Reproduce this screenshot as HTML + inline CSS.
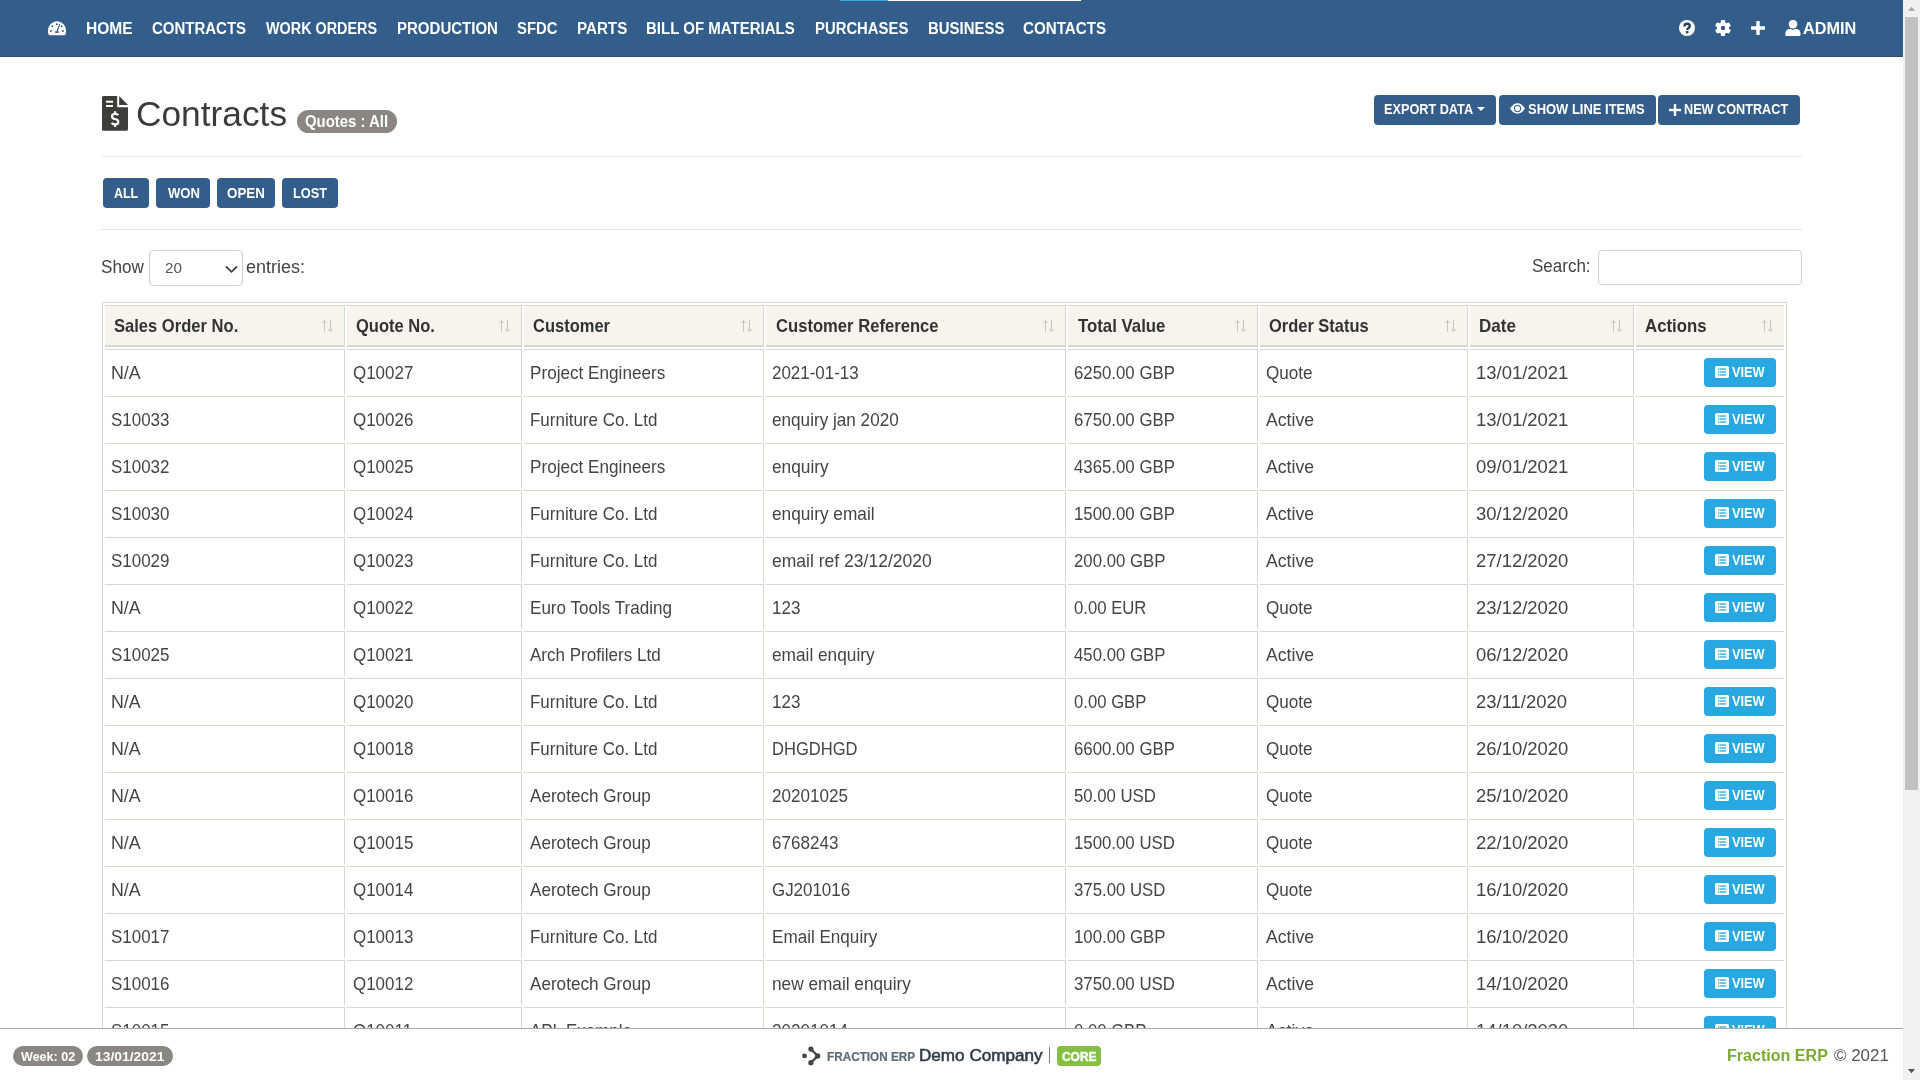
<!DOCTYPE html>
<html><head><meta charset="utf-8">
<style>
*{box-sizing:border-box;margin:0;padding:0}
html,body{width:1920px;height:1080px;overflow:hidden;background:#fff;will-change:transform;font-family:"Liberation Sans",sans-serif;color:#444}
.a{position:absolute}
.t{position:absolute;white-space:nowrap;transform-origin:0 0}
#nav{left:0;top:0;width:1903px;height:57px;background:#335d8b;border-bottom:1px solid #30506f}
.box{position:absolute;background:#335d8b;border-radius:4px}
.hr{position:absolute;left:101px;width:1701px;height:1px;background:#e6e6e6}
table{position:absolute;left:102px;top:302px;border:1px solid #d9d6d1;border-collapse:separate;border-spacing:2px;table-layout:fixed}
td,th{border-top:1px solid #d9d6d1;border-right:1px solid #d9d6d1;text-align:left;white-space:nowrap;overflow:hidden;font-family:"Liberation Sans",sans-serif}
th{height:42px;background:#f7f4f0;border-bottom:2px solid #d9d6d1;font-size:18.5px;font-weight:bold;color:#333;padding:1px 0 0 10px;position:relative;letter-spacing:-0.75px;vertical-align:middle}
td{height:45px;font-size:18.5px;color:#444;padding:2px 0 0 6px;vertical-align:middle;}
.s{display:inline-block;transform-origin:0 50%}
td:last-child,th:last-child{border-right:0}
.srt{position:absolute;right:10px;top:14px}
.view{position:relative;display:block;float:right;margin-right:8px;margin-top:-2px;background:#27a8e0;height:29px;width:72px;border-radius:4px}
.vt{position:absolute;left:28px;top:7.6px;font-size:14.5px;line-height:14.5px;font-weight:bold;color:#fff;transform:scaleX(0.88);transform-origin:0 0}
#footer{left:0;top:1028px;width:1903px;height:52px;background:#fff;border-top:1px solid #a9a9a9}
.fb{position:absolute;background:#8a8782;border-radius:10px}
</style></head><body>
<div id="nav" class="a"></div>
<div class="a" style="left:840px;top:0;width:48px;height:1px;background:#3aa8d8"></div>
<div class="a" style="left:888px;top:0;width:193px;height:1px;background:#fff"></div>
<!-- gauge -->
<svg class="a" style="left:48px;top:20.8px" width="18" height="15" viewBox="0 0 18 15">
<path d="M2 14.3 Q0.4 14.3 0.2 12.6 Q0 11.5 0 9.5 A9 9.3 0 0 1 18 9.5 Q18 11.5 17.8 12.6 Q17.6 14.3 16 14.3 Z" fill="#fff"/>
<g fill="#335d8b"><circle cx="4.4" cy="5.2" r="1"/><circle cx="8.9" cy="3.2" r="1"/><circle cx="13.6" cy="5.2" r="1"/><circle cx="2.9" cy="10.1" r="1"/><circle cx="14.9" cy="10.1" r="1"/>
<path d="M11.2 2.9 L12.3 3.3 L9.8 10.3 L8.6 10.1 Z"/><rect x="7.2" y="10.2" width="3.5" height="1.7"/></g>
</svg>
<!-- right nav icons -->
<svg class="a" style="left:1679px;top:20px" width="16" height="16" viewBox="0 0 16 16">
<circle cx="8" cy="8" r="8" fill="#fff"/>
<path d="M5.5 6.4 Q5.5 3.8 8.1 3.8 Q10.8 3.8 10.8 6.1 Q10.8 7.5 9.3 8.2 Q8.2 8.8 8.2 10" stroke="#27405c" stroke-width="2.4" fill="none"/>
<rect x="6.9" y="11" width="2.6" height="2.2" rx="0.4" fill="#27405c"/>
</svg>
<svg class="a" style="left:1715px;top:20px" width="16" height="16" viewBox="0 0 16 16">
<g fill="#fff" transform="translate(8 8)">
<circle r="6.1"/>
<rect x="-2.1" y="-8" width="4.2" height="16" rx="0.7"/>
<rect x="-2.1" y="-8" width="4.2" height="16" rx="0.7" transform="rotate(60)"/>
<rect x="-2.1" y="-8" width="4.2" height="16" rx="0.7" transform="rotate(120)"/>
</g>
<circle cx="8" cy="8" r="2.2" fill="#335d8b"/>
</svg>
<svg class="a" style="left:1751px;top:21px" width="14" height="14" viewBox="0 0 14 14">
<rect x="5.3" y="0" width="3.4" height="14" rx="0.6" fill="#fff"/><rect x="0" y="5.3" width="14" height="3.4" rx="0.6" fill="#fff"/>
</svg>
<svg class="a" style="left:1784.5px;top:20px" width="16" height="16" viewBox="0 0 16 16">
<circle cx="8" cy="4.1" r="4.3" fill="#fff"/>
<path d="M0.3 14.6 Q0.3 9.4 4.4 9.1 Q6.3 9.0 8 9.9 Q9.7 9.0 11.6 9.1 Q15.6 9.4 15.6 14.6 Q15.6 16.1 14.1 16.1 L1.8 16.1 Q0.3 16.1 0.3 14.6 Z" fill="#fff"/>
</svg>
<!-- scrollbar -->
<div class="a" style="left:1903px;top:0;width:17px;height:1080px;background:#f1f1f1"></div>
<div class="a" style="left:1905px;top:17px;width:13px;height:773px;background:#c1c1c1"></div>
<svg class="a" style="left:1903px;top:0" width="17" height="17"><path d="M5 10.8 L8.5 6.8 L12 10.8 Z" fill="#a3a3a3"/></svg>
<svg class="a" style="left:1903px;top:1063px" width="17" height="17"><path d="M5 6 L8.5 10.3 L12 6 Z" fill="#505050"/></svg>

<!-- title -->
<svg class="a" style="left:102px;top:96px" width="26" height="35" viewBox="0 0 26 35">
<path d="M0 1.5 Q0 0 1.5 0 L15.2 0 L15.2 11.2 L26 11.2 L26 33.2 Q26 34.7 24.5 34.7 L1.5 34.7 Q0 34.7 0 33.2 Z" fill="#3d3d3a"/>
<path d="M17.2 0 L26 8.9 L17.2 8.9 Z" fill="#3d3d3a"/>
<rect x="4" y="4.7" width="7" height="2" fill="#fff"/><rect x="4" y="9" width="7" height="2" fill="#fff"/>
<path d="M16.3 19.2 Q15.4 17.9 13.1 17.9 Q10 17.9 10 20.4 Q10 22.5 13.1 23 Q16.3 23.5 16.3 25.9 Q16.3 28.3 13.1 28.3 Q10.6 28.3 9.6 26.8 M13.1 15.2 L13.1 17.9 M13.1 28.3 L13.1 31" stroke="#fff" stroke-width="2.2" fill="none"/>
</svg>
<div class="a" style="left:297px;top:110px;width:100px;height:23px;background:#8a8782;border-radius:11.5px"></div>

<!-- top right buttons -->
<div class="box" style="left:1374px;top:95px;width:122px;height:30px"></div>
<div class="box" style="left:1499px;top:95px;width:157px;height:30px"></div>
<div class="box" style="left:1658px;top:95px;width:142px;height:30px"></div>
<svg class="a" style="left:1477px;top:107px" width="8" height="4"><path d="M0 0 L8 0 L4 4 Z" fill="#fff"/></svg>
<svg class="a" style="left:1510px;top:103px" width="15" height="11" viewBox="0 0 15 11">
<path d="M0 5.5 Q3.5 0.3 7.5 0.3 Q11.5 0.3 15 5.5 Q11.5 10.7 7.5 10.7 Q3.5 10.7 0 5.5 Z" fill="#fff"/>
<circle cx="7.5" cy="5.6" r="3.1" fill="none" stroke="#335d8b" stroke-width="1.1"/>
</svg>
<svg class="a" style="left:1669px;top:103.5px" width="12" height="12" viewBox="0 0 12 12">
<rect x="4.8" y="0" width="2.4" height="12" fill="#fff"/><rect x="0" y="4.8" width="12" height="2.4" fill="#fff"/>
</svg>
<div class="hr" style="top:156px"></div>
<div class="box" style="left:103px;top:178px;width:46px;height:30px"></div>
<div class="box" style="left:156px;top:178px;width:54px;height:30px"></div>
<div class="box" style="left:217px;top:178px;width:58px;height:30px"></div>
<div class="box" style="left:282px;top:178px;width:56px;height:30px"></div>
<div class="hr" style="top:229px"></div>

<div class="a" style="left:149px;top:250px;width:94px;height:36px;border:1px solid #cfcfcf;border-radius:4px"></div>
<svg class="a" style="left:224.5px;top:264.5px" width="13" height="9" viewBox="0 0 13 9"><path d="M1 1.5 L6.5 6.8 L12 1.5" stroke="#444" stroke-width="1.8" fill="none"/></svg>
<div class="a" style="left:1598px;top:250px;width:204px;height:35px;border:1px solid #cfcfcf;border-radius:4px"></div>

<table>
<colgroup><col style="width:240px"><col style="width:175px"><col style="width:240px"><col style="width:300px"><col style="width:190px"><col style="width:208px"><col style="width:164px"><col style="width:148px"></colgroup>
<thead><tr><th><svg class="srt" width="13" height="13" viewBox="0 0 13 13"><g stroke="#c8c5c0" stroke-width="1" fill="none"><path d="M3.5 0.6V11.8"/><path d="M0.9 3.2L3.5 0.6L6.1 3.2"/><path d="M9.5 0V11.5"/><path d="M6.9 8.9L9.5 11.5L12.1 8.9"/></g></svg></th><th><svg class="srt" width="13" height="13" viewBox="0 0 13 13"><g stroke="#c8c5c0" stroke-width="1" fill="none"><path d="M3.5 0.6V11.8"/><path d="M0.9 3.2L3.5 0.6L6.1 3.2"/><path d="M9.5 0V11.5"/><path d="M6.9 8.9L9.5 11.5L12.1 8.9"/></g></svg></th><th><svg class="srt" width="13" height="13" viewBox="0 0 13 13"><g stroke="#c8c5c0" stroke-width="1" fill="none"><path d="M3.5 0.6V11.8"/><path d="M0.9 3.2L3.5 0.6L6.1 3.2"/><path d="M9.5 0V11.5"/><path d="M6.9 8.9L9.5 11.5L12.1 8.9"/></g></svg></th><th><svg class="srt" width="13" height="13" viewBox="0 0 13 13"><g stroke="#c8c5c0" stroke-width="1" fill="none"><path d="M3.5 0.6V11.8"/><path d="M0.9 3.2L3.5 0.6L6.1 3.2"/><path d="M9.5 0V11.5"/><path d="M6.9 8.9L9.5 11.5L12.1 8.9"/></g></svg></th><th><svg class="srt" width="13" height="13" viewBox="0 0 13 13"><g stroke="#c8c5c0" stroke-width="1" fill="none"><path d="M3.5 0.6V11.8"/><path d="M0.9 3.2L3.5 0.6L6.1 3.2"/><path d="M9.5 0V11.5"/><path d="M6.9 8.9L9.5 11.5L12.1 8.9"/></g></svg></th><th><svg class="srt" width="13" height="13" viewBox="0 0 13 13"><g stroke="#c8c5c0" stroke-width="1" fill="none"><path d="M3.5 0.6V11.8"/><path d="M0.9 3.2L3.5 0.6L6.1 3.2"/><path d="M9.5 0V11.5"/><path d="M6.9 8.9L9.5 11.5L12.1 8.9"/></g></svg></th><th><svg class="srt" width="13" height="13" viewBox="0 0 13 13"><g stroke="#c8c5c0" stroke-width="1" fill="none"><path d="M3.5 0.6V11.8"/><path d="M0.9 3.2L3.5 0.6L6.1 3.2"/><path d="M9.5 0V11.5"/><path d="M6.9 8.9L9.5 11.5L12.1 8.9"/></g></svg></th><th><svg class="srt" width="13" height="13" viewBox="0 0 13 13"><g stroke="#c8c5c0" stroke-width="1" fill="none"><path d="M3.5 0.6V11.8"/><path d="M0.9 3.2L3.5 0.6L6.1 3.2"/><path d="M9.5 0V11.5"/><path d="M6.9 8.9L9.5 11.5L12.1 8.9"/></g></svg></th></tr></thead>
<tbody>
<tr><td><span class="s" style="transform:scaleX(0.9622)">N/A</span></td><td><span class="s" style="transform:scaleX(0.9162)">Q10027</span></td><td><span class="s" style="transform:scaleX(0.9262)">Project Engineers</span></td><td><span class="s" style="transform:scaleX(0.9156)">2021-01-13</span></td><td><span class="s" style="transform:scaleX(0.9079)">6250.00 GBP</span></td><td><span class="s" style="transform:scaleX(0.9237)">Quote</span></td><td><span class="s" style="transform:scaleX(0.9978)">13/01/2021</span></td><td><span class="view"><svg width="14" height="12" viewBox="0 0 14 12" style="position:absolute;left:11px;top:8px"><rect x="0" y="0" width="14" height="12" rx="1.5" fill="#fff"/><g fill="#27a8e0"><rect x="3" y="2.4" width="1.2" height="1.3"/><rect x="3" y="5.4" width="1.2" height="1.3"/><rect x="3" y="8.3" width="1.2" height="1.3"/><rect x="4.6" y="2.4" width="6.6" height="1.3"/><rect x="4.6" y="5.4" width="6.6" height="1.3"/><rect x="4.6" y="8.3" width="6.6" height="1.3"/></g></svg><span class="vt">VIEW</span></span></td></tr>
<tr><td><span class="s" style="transform:scaleX(0.9169)">S10033</span></td><td><span class="s" style="transform:scaleX(0.9162)">Q10026</span></td><td><span class="s" style="transform:scaleX(0.9180)">Furniture Co. Ltd</span></td><td><span class="s" style="transform:scaleX(0.9265)">enquiry jan 2020</span></td><td><span class="s" style="transform:scaleX(0.9079)">6750.00 GBP</span></td><td><span class="s" style="transform:scaleX(0.9531)">Active</span></td><td><span class="s" style="transform:scaleX(0.9978)">13/01/2021</span></td><td><span class="view"><svg width="14" height="12" viewBox="0 0 14 12" style="position:absolute;left:11px;top:8px"><rect x="0" y="0" width="14" height="12" rx="1.5" fill="#fff"/><g fill="#27a8e0"><rect x="3" y="2.4" width="1.2" height="1.3"/><rect x="3" y="5.4" width="1.2" height="1.3"/><rect x="3" y="8.3" width="1.2" height="1.3"/><rect x="4.6" y="2.4" width="6.6" height="1.3"/><rect x="4.6" y="5.4" width="6.6" height="1.3"/><rect x="4.6" y="8.3" width="6.6" height="1.3"/></g></svg><span class="vt">VIEW</span></span></td></tr>
<tr><td><span class="s" style="transform:scaleX(0.9169)">S10032</span></td><td><span class="s" style="transform:scaleX(0.9162)">Q10025</span></td><td><span class="s" style="transform:scaleX(0.9262)">Project Engineers</span></td><td><span class="s" style="transform:scaleX(0.9352)">enquiry</span></td><td><span class="s" style="transform:scaleX(0.9079)">4365.00 GBP</span></td><td><span class="s" style="transform:scaleX(0.9531)">Active</span></td><td><span class="s" style="transform:scaleX(0.9978)">09/01/2021</span></td><td><span class="view"><svg width="14" height="12" viewBox="0 0 14 12" style="position:absolute;left:11px;top:8px"><rect x="0" y="0" width="14" height="12" rx="1.5" fill="#fff"/><g fill="#27a8e0"><rect x="3" y="2.4" width="1.2" height="1.3"/><rect x="3" y="5.4" width="1.2" height="1.3"/><rect x="3" y="8.3" width="1.2" height="1.3"/><rect x="4.6" y="2.4" width="6.6" height="1.3"/><rect x="4.6" y="5.4" width="6.6" height="1.3"/><rect x="4.6" y="8.3" width="6.6" height="1.3"/></g></svg><span class="vt">VIEW</span></span></td></tr>
<tr><td><span class="s" style="transform:scaleX(0.9169)">S10030</span></td><td><span class="s" style="transform:scaleX(0.9162)">Q10024</span></td><td><span class="s" style="transform:scaleX(0.9180)">Furniture Co. Ltd</span></td><td><span class="s" style="transform:scaleX(0.9323)">enquiry email</span></td><td><span class="s" style="transform:scaleX(0.9079)">1500.00 GBP</span></td><td><span class="s" style="transform:scaleX(0.9531)">Active</span></td><td><span class="s" style="transform:scaleX(0.9978)">30/12/2020</span></td><td><span class="view"><svg width="14" height="12" viewBox="0 0 14 12" style="position:absolute;left:11px;top:8px"><rect x="0" y="0" width="14" height="12" rx="1.5" fill="#fff"/><g fill="#27a8e0"><rect x="3" y="2.4" width="1.2" height="1.3"/><rect x="3" y="5.4" width="1.2" height="1.3"/><rect x="3" y="8.3" width="1.2" height="1.3"/><rect x="4.6" y="2.4" width="6.6" height="1.3"/><rect x="4.6" y="5.4" width="6.6" height="1.3"/><rect x="4.6" y="8.3" width="6.6" height="1.3"/></g></svg><span class="vt">VIEW</span></span></td></tr>
<tr><td><span class="s" style="transform:scaleX(0.9169)">S10029</span></td><td><span class="s" style="transform:scaleX(0.9162)">Q10023</span></td><td><span class="s" style="transform:scaleX(0.9180)">Furniture Co. Ltd</span></td><td><span class="s" style="transform:scaleX(0.9472)">email ref 23/12/2020</span></td><td><span class="s" style="transform:scaleX(0.9064)">200.00 GBP</span></td><td><span class="s" style="transform:scaleX(0.9531)">Active</span></td><td><span class="s" style="transform:scaleX(0.9978)">27/12/2020</span></td><td><span class="view"><svg width="14" height="12" viewBox="0 0 14 12" style="position:absolute;left:11px;top:8px"><rect x="0" y="0" width="14" height="12" rx="1.5" fill="#fff"/><g fill="#27a8e0"><rect x="3" y="2.4" width="1.2" height="1.3"/><rect x="3" y="5.4" width="1.2" height="1.3"/><rect x="3" y="8.3" width="1.2" height="1.3"/><rect x="4.6" y="2.4" width="6.6" height="1.3"/><rect x="4.6" y="5.4" width="6.6" height="1.3"/><rect x="4.6" y="8.3" width="6.6" height="1.3"/></g></svg><span class="vt">VIEW</span></span></td></tr>
<tr><td><span class="s" style="transform:scaleX(0.9622)">N/A</span></td><td><span class="s" style="transform:scaleX(0.9162)">Q10022</span></td><td><span class="s" style="transform:scaleX(0.9221)">Euro Tools Trading</span></td><td><span class="s" style="transform:scaleX(0.9222)">123</span></td><td><span class="s" style="transform:scaleX(0.9024)">0.00 EUR</span></td><td><span class="s" style="transform:scaleX(0.9237)">Quote</span></td><td><span class="s" style="transform:scaleX(0.9978)">23/12/2020</span></td><td><span class="view"><svg width="14" height="12" viewBox="0 0 14 12" style="position:absolute;left:11px;top:8px"><rect x="0" y="0" width="14" height="12" rx="1.5" fill="#fff"/><g fill="#27a8e0"><rect x="3" y="2.4" width="1.2" height="1.3"/><rect x="3" y="5.4" width="1.2" height="1.3"/><rect x="3" y="8.3" width="1.2" height="1.3"/><rect x="4.6" y="2.4" width="6.6" height="1.3"/><rect x="4.6" y="5.4" width="6.6" height="1.3"/><rect x="4.6" y="8.3" width="6.6" height="1.3"/></g></svg><span class="vt">VIEW</span></span></td></tr>
<tr><td><span class="s" style="transform:scaleX(0.9169)">S10025</span></td><td><span class="s" style="transform:scaleX(0.9162)">Q10021</span></td><td><span class="s" style="transform:scaleX(0.9207)">Arch Profilers Ltd</span></td><td><span class="s" style="transform:scaleX(0.9323)">email enquiry</span></td><td><span class="s" style="transform:scaleX(0.9064)">450.00 GBP</span></td><td><span class="s" style="transform:scaleX(0.9531)">Active</span></td><td><span class="s" style="transform:scaleX(0.9978)">06/12/2020</span></td><td><span class="view"><svg width="14" height="12" viewBox="0 0 14 12" style="position:absolute;left:11px;top:8px"><rect x="0" y="0" width="14" height="12" rx="1.5" fill="#fff"/><g fill="#27a8e0"><rect x="3" y="2.4" width="1.2" height="1.3"/><rect x="3" y="5.4" width="1.2" height="1.3"/><rect x="3" y="8.3" width="1.2" height="1.3"/><rect x="4.6" y="2.4" width="6.6" height="1.3"/><rect x="4.6" y="5.4" width="6.6" height="1.3"/><rect x="4.6" y="8.3" width="6.6" height="1.3"/></g></svg><span class="vt">VIEW</span></span></td></tr>
<tr><td><span class="s" style="transform:scaleX(0.9622)">N/A</span></td><td><span class="s" style="transform:scaleX(0.9162)">Q10020</span></td><td><span class="s" style="transform:scaleX(0.9180)">Furniture Co. Ltd</span></td><td><span class="s" style="transform:scaleX(0.9222)">123</span></td><td><span class="s" style="transform:scaleX(0.9024)">0.00 GBP</span></td><td><span class="s" style="transform:scaleX(0.9237)">Quote</span></td><td><span class="s" style="transform:scaleX(0.9978)">23/11/2020</span></td><td><span class="view"><svg width="14" height="12" viewBox="0 0 14 12" style="position:absolute;left:11px;top:8px"><rect x="0" y="0" width="14" height="12" rx="1.5" fill="#fff"/><g fill="#27a8e0"><rect x="3" y="2.4" width="1.2" height="1.3"/><rect x="3" y="5.4" width="1.2" height="1.3"/><rect x="3" y="8.3" width="1.2" height="1.3"/><rect x="4.6" y="2.4" width="6.6" height="1.3"/><rect x="4.6" y="5.4" width="6.6" height="1.3"/><rect x="4.6" y="8.3" width="6.6" height="1.3"/></g></svg><span class="vt">VIEW</span></span></td></tr>
<tr><td><span class="s" style="transform:scaleX(0.9622)">N/A</span></td><td><span class="s" style="transform:scaleX(0.9162)">Q10018</span></td><td><span class="s" style="transform:scaleX(0.9180)">Furniture Co. Ltd</span></td><td><span class="s" style="transform:scaleX(0.8947)">DHGDHGD</span></td><td><span class="s" style="transform:scaleX(0.9079)">6600.00 GBP</span></td><td><span class="s" style="transform:scaleX(0.9237)">Quote</span></td><td><span class="s" style="transform:scaleX(0.9978)">26/10/2020</span></td><td><span class="view"><svg width="14" height="12" viewBox="0 0 14 12" style="position:absolute;left:11px;top:8px"><rect x="0" y="0" width="14" height="12" rx="1.5" fill="#fff"/><g fill="#27a8e0"><rect x="3" y="2.4" width="1.2" height="1.3"/><rect x="3" y="5.4" width="1.2" height="1.3"/><rect x="3" y="8.3" width="1.2" height="1.3"/><rect x="4.6" y="2.4" width="6.6" height="1.3"/><rect x="4.6" y="5.4" width="6.6" height="1.3"/><rect x="4.6" y="8.3" width="6.6" height="1.3"/></g></svg><span class="vt">VIEW</span></span></td></tr>
<tr><td><span class="s" style="transform:scaleX(0.9622)">N/A</span></td><td><span class="s" style="transform:scaleX(0.9162)">Q10016</span></td><td><span class="s" style="transform:scaleX(0.9245)">Aerotech Group</span></td><td><span class="s" style="transform:scaleX(0.9222)">20201025</span></td><td><span class="s" style="transform:scaleX(0.9046)">50.00 USD</span></td><td><span class="s" style="transform:scaleX(0.9237)">Quote</span></td><td><span class="s" style="transform:scaleX(0.9978)">25/10/2020</span></td><td><span class="view"><svg width="14" height="12" viewBox="0 0 14 12" style="position:absolute;left:11px;top:8px"><rect x="0" y="0" width="14" height="12" rx="1.5" fill="#fff"/><g fill="#27a8e0"><rect x="3" y="2.4" width="1.2" height="1.3"/><rect x="3" y="5.4" width="1.2" height="1.3"/><rect x="3" y="8.3" width="1.2" height="1.3"/><rect x="4.6" y="2.4" width="6.6" height="1.3"/><rect x="4.6" y="5.4" width="6.6" height="1.3"/><rect x="4.6" y="8.3" width="6.6" height="1.3"/></g></svg><span class="vt">VIEW</span></span></td></tr>
<tr><td><span class="s" style="transform:scaleX(0.9622)">N/A</span></td><td><span class="s" style="transform:scaleX(0.9162)">Q10015</span></td><td><span class="s" style="transform:scaleX(0.9245)">Aerotech Group</span></td><td><span class="s" style="transform:scaleX(0.9222)">6768243</span></td><td><span class="s" style="transform:scaleX(0.9079)">1500.00 USD</span></td><td><span class="s" style="transform:scaleX(0.9237)">Quote</span></td><td><span class="s" style="transform:scaleX(0.9978)">22/10/2020</span></td><td><span class="view"><svg width="14" height="12" viewBox="0 0 14 12" style="position:absolute;left:11px;top:8px"><rect x="0" y="0" width="14" height="12" rx="1.5" fill="#fff"/><g fill="#27a8e0"><rect x="3" y="2.4" width="1.2" height="1.3"/><rect x="3" y="5.4" width="1.2" height="1.3"/><rect x="3" y="8.3" width="1.2" height="1.3"/><rect x="4.6" y="2.4" width="6.6" height="1.3"/><rect x="4.6" y="5.4" width="6.6" height="1.3"/><rect x="4.6" y="8.3" width="6.6" height="1.3"/></g></svg><span class="vt">VIEW</span></span></td></tr>
<tr><td><span class="s" style="transform:scaleX(0.9622)">N/A</span></td><td><span class="s" style="transform:scaleX(0.9162)">Q10014</span></td><td><span class="s" style="transform:scaleX(0.9245)">Aerotech Group</span></td><td><span class="s" style="transform:scaleX(0.9146)">GJ201016</span></td><td><span class="s" style="transform:scaleX(0.9064)">375.00 USD</span></td><td><span class="s" style="transform:scaleX(0.9237)">Quote</span></td><td><span class="s" style="transform:scaleX(0.9978)">16/10/2020</span></td><td><span class="view"><svg width="14" height="12" viewBox="0 0 14 12" style="position:absolute;left:11px;top:8px"><rect x="0" y="0" width="14" height="12" rx="1.5" fill="#fff"/><g fill="#27a8e0"><rect x="3" y="2.4" width="1.2" height="1.3"/><rect x="3" y="5.4" width="1.2" height="1.3"/><rect x="3" y="8.3" width="1.2" height="1.3"/><rect x="4.6" y="2.4" width="6.6" height="1.3"/><rect x="4.6" y="5.4" width="6.6" height="1.3"/><rect x="4.6" y="8.3" width="6.6" height="1.3"/></g></svg><span class="vt">VIEW</span></span></td></tr>
<tr><td><span class="s" style="transform:scaleX(0.9169)">S10017</span></td><td><span class="s" style="transform:scaleX(0.9162)">Q10013</span></td><td><span class="s" style="transform:scaleX(0.9180)">Furniture Co. Ltd</span></td><td><span class="s" style="transform:scaleX(0.9236)">Email Enquiry</span></td><td><span class="s" style="transform:scaleX(0.9064)">100.00 GBP</span></td><td><span class="s" style="transform:scaleX(0.9531)">Active</span></td><td><span class="s" style="transform:scaleX(0.9978)">16/10/2020</span></td><td><span class="view"><svg width="14" height="12" viewBox="0 0 14 12" style="position:absolute;left:11px;top:8px"><rect x="0" y="0" width="14" height="12" rx="1.5" fill="#fff"/><g fill="#27a8e0"><rect x="3" y="2.4" width="1.2" height="1.3"/><rect x="3" y="5.4" width="1.2" height="1.3"/><rect x="3" y="8.3" width="1.2" height="1.3"/><rect x="4.6" y="2.4" width="6.6" height="1.3"/><rect x="4.6" y="5.4" width="6.6" height="1.3"/><rect x="4.6" y="8.3" width="6.6" height="1.3"/></g></svg><span class="vt">VIEW</span></span></td></tr>
<tr><td><span class="s" style="transform:scaleX(0.9169)">S10016</span></td><td><span class="s" style="transform:scaleX(0.9162)">Q10012</span></td><td><span class="s" style="transform:scaleX(0.9245)">Aerotech Group</span></td><td><span class="s" style="transform:scaleX(0.9309)">new email enquiry</span></td><td><span class="s" style="transform:scaleX(0.9079)">3750.00 USD</span></td><td><span class="s" style="transform:scaleX(0.9531)">Active</span></td><td><span class="s" style="transform:scaleX(0.9978)">14/10/2020</span></td><td><span class="view"><svg width="14" height="12" viewBox="0 0 14 12" style="position:absolute;left:11px;top:8px"><rect x="0" y="0" width="14" height="12" rx="1.5" fill="#fff"/><g fill="#27a8e0"><rect x="3" y="2.4" width="1.2" height="1.3"/><rect x="3" y="5.4" width="1.2" height="1.3"/><rect x="3" y="8.3" width="1.2" height="1.3"/><rect x="4.6" y="2.4" width="6.6" height="1.3"/><rect x="4.6" y="5.4" width="6.6" height="1.3"/><rect x="4.6" y="8.3" width="6.6" height="1.3"/></g></svg><span class="vt">VIEW</span></span></td></tr>
<tr><td><span class="s" style="transform:scaleX(0.9169)">S10015</span></td><td><span class="s" style="transform:scaleX(0.9162)">Q10011</span></td><td><span class="s" style="transform:scaleX(0.9152)">APL Example</span></td><td><span class="s" style="transform:scaleX(0.9222)">20201014</span></td><td><span class="s" style="transform:scaleX(0.9024)">0.00 GBP</span></td><td><span class="s" style="transform:scaleX(0.9531)">Active</span></td><td><span class="s" style="transform:scaleX(0.9978)">14/10/2020</span></td><td><span class="view"><svg width="14" height="12" viewBox="0 0 14 12" style="position:absolute;left:11px;top:8px"><rect x="0" y="0" width="14" height="12" rx="1.5" fill="#fff"/><g fill="#27a8e0"><rect x="3" y="2.4" width="1.2" height="1.3"/><rect x="3" y="5.4" width="1.2" height="1.3"/><rect x="3" y="8.3" width="1.2" height="1.3"/><rect x="4.6" y="2.4" width="6.6" height="1.3"/><rect x="4.6" y="5.4" width="6.6" height="1.3"/><rect x="4.6" y="8.3" width="6.6" height="1.3"/></g></svg><span class="vt">VIEW</span></span></td></tr>
</tbody>
</table>

<div id="footer" class="a"></div>
<div class="fb" style="left:13px;top:1046px;width:70px;height:20px"></div>
<div class="fb" style="left:87px;top:1046px;width:86px;height:20px"></div>
<svg class="a" style="left:800px;top:1045px" width="22" height="22" viewBox="0 0 22 22">
<path d="M10.9 4.1 L17.7 10.9 L10.9 17.7" stroke="#444" stroke-width="2.2" fill="none"/>
<g fill="#444"><circle cx="4.5" cy="10.9" r="2.4"/><circle cx="10.9" cy="4.1" r="2.6"/><circle cx="17.7" cy="10.9" r="2.6"/><circle cx="10.9" cy="17.7" r="2.6"/></g>
</svg>
<div class="a" style="left:1049px;top:1047px;width:1.3px;height:16px;background:#777"></div>
<div class="a" style="left:1057px;top:1046px;width:44px;height:19.5px;background:#84bf41;border-radius:4px"></div>
<div class="t" style="left:85.71px;top:20.00px;font-size:17.40px;line-height:17.40px;transform:scaleX(0.8941);font-weight:bold;color:#fff;">HOME</div>
<div class="t" style="left:151.64px;top:20.00px;font-size:17.40px;line-height:17.40px;transform:scaleX(0.8620);font-weight:bold;color:#fff;">CONTRACTS</div>
<div class="t" style="left:266.20px;top:20.00px;font-size:17.40px;line-height:17.40px;transform:scaleX(0.8269);font-weight:bold;color:#fff;">WORK ORDERS</div>
<div class="t" style="left:396.54px;top:20.00px;font-size:17.40px;line-height:17.40px;transform:scaleX(0.8635);font-weight:bold;color:#fff;">PRODUCTION</div>
<div class="t" style="left:517.15px;top:20.00px;font-size:17.40px;line-height:17.40px;transform:scaleX(0.8522);font-weight:bold;color:#fff;">SFDC</div>
<div class="t" style="left:576.63px;top:20.00px;font-size:17.40px;line-height:17.40px;transform:scaleX(0.8714);font-weight:bold;color:#fff;">PARTS</div>
<div class="t" style="left:645.94px;top:20.00px;font-size:17.40px;line-height:17.40px;transform:scaleX(0.8632);font-weight:bold;color:#fff;">BILL OF MATERIALS</div>
<div class="t" style="left:814.55px;top:20.00px;font-size:17.40px;line-height:17.40px;transform:scaleX(0.8546);font-weight:bold;color:#fff;">PURCHASES</div>
<div class="t" style="left:927.54px;top:20.00px;font-size:17.40px;line-height:17.40px;transform:scaleX(0.8598);font-weight:bold;color:#fff;">BUSINESS</div>
<div class="t" style="left:1023.03px;top:20.00px;font-size:17.40px;line-height:17.40px;transform:scaleX(0.8713);font-weight:bold;color:#fff;">CONTACTS</div>
<div class="t" style="left:1803.06px;top:20.00px;font-size:17.40px;line-height:17.40px;transform:scaleX(0.9364);font-weight:bold;color:#fff;">ADMIN</div>
<div class="t" style="left:136.23px;top:97.30px;font-size:35.90px;line-height:35.90px;transform:scaleX(0.9834);color:#3b3b3b;">Contracts</div>
<div class="t" style="left:305.12px;top:114.30px;font-size:16.90px;line-height:16.90px;transform:scaleX(0.8826);font-weight:bold;color:#fff;">Quotes : All</div>
<div class="t" style="left:114.00px;top:185.00px;font-size:15.10px;line-height:15.10px;transform:scaleX(0.8241);font-weight:bold;color:#fff;">ALL</div>
<div class="t" style="left:167.50px;top:185.00px;font-size:15.10px;line-height:15.10px;transform:scaleX(0.8681);font-weight:bold;color:#fff;">WON</div>
<div class="t" style="left:227.01px;top:185.00px;font-size:15.10px;line-height:15.10px;transform:scaleX(0.8854);font-weight:bold;color:#fff;">OPEN</div>
<div class="t" style="left:292.65px;top:185.00px;font-size:15.10px;line-height:15.10px;transform:scaleX(0.8462);font-weight:bold;color:#fff;">LOST</div>
<div class="t" style="left:1384.18px;top:101.00px;font-size:15.50px;line-height:15.50px;transform:scaleX(0.8187);font-weight:bold;color:#fff;">EXPORT DATA</div>
<div class="t" style="left:1528.16px;top:101.00px;font-size:15.50px;line-height:15.50px;transform:scaleX(0.8362);font-weight:bold;color:#fff;">SHOW LINE ITEMS</div>
<div class="t" style="left:1684.18px;top:101.00px;font-size:15.50px;line-height:15.50px;transform:scaleX(0.8173);font-weight:bold;color:#fff;">NEW CONTRACT</div>
<div class="t" style="left:101.19px;top:258.20px;font-size:18.75px;line-height:18.75px;transform:scaleX(0.9130);color:#444;">Show</div>
<div class="t" style="left:246.44px;top:258.20px;font-size:18.75px;line-height:18.75px;transform:scaleX(0.9576);color:#444;">entries:</div>
<div class="t" style="left:1532.39px;top:256.90px;font-size:18.75px;line-height:18.75px;transform:scaleX(0.9065);color:#444;">Search:</div>
<div class="t" style="left:164.59px;top:259.60px;font-size:15.10px;line-height:15.10px;transform:scaleX(1.0062);color:#555;">20</div>
<div class="t" style="left:114.11px;top:316.90px;font-size:18.60px;line-height:18.60px;transform:scaleX(0.8905);font-weight:bold;color:#333;">Sales Order No.</div>
<div class="t" style="left:356.31px;top:316.90px;font-size:18.60px;line-height:18.60px;transform:scaleX(0.8885);font-weight:bold;color:#333;">Quote No.</div>
<div class="t" style="left:533.11px;top:316.90px;font-size:18.60px;line-height:18.60px;transform:scaleX(0.8872);font-weight:bold;color:#333;">Customer</div>
<div class="t" style="left:775.51px;top:316.90px;font-size:18.60px;line-height:18.60px;transform:scaleX(0.8939);font-weight:bold;color:#333;">Customer Reference</div>
<div class="t" style="left:1078.30px;top:316.90px;font-size:18.60px;line-height:18.60px;transform:scaleX(0.9031);font-weight:bold;color:#333;">Total Value</div>
<div class="t" style="left:1269.12px;top:316.90px;font-size:18.60px;line-height:18.60px;transform:scaleX(0.8847);font-weight:bold;color:#333;">Order Status</div>
<div class="t" style="left:1479.38px;top:316.90px;font-size:18.60px;line-height:18.60px;transform:scaleX(0.9154);font-weight:bold;color:#333;">Date</div>
<div class="t" style="left:1645.10px;top:316.90px;font-size:18.60px;line-height:18.60px;transform:scaleX(0.9030);font-weight:bold;color:#333;">Actions</div>
<div class="t" style="left:21.10px;top:1049.90px;font-size:13.60px;line-height:13.60px;transform:scaleX(0.9241);font-weight:bold;color:#fff;">Week: 02</div>
<div class="t" style="left:94.58px;top:1049.90px;font-size:13.60px;line-height:13.60px;transform:scaleX(1.0209);font-weight:bold;color:#fff;">13/01/2021</div>
<div class="t" style="left:826.51px;top:1051.80px;font-size:11.90px;line-height:11.90px;transform:scaleX(0.9886);font-weight:bold;color:#5d6b78;-webkit-text-stroke:0.2px #5d6b78;">FRACTION ERP</div>
<div class="t" style="left:918.98px;top:1047.60px;font-size:16.70px;line-height:16.70px;transform:scaleX(1.0250);color:#2f3b48;-webkit-text-stroke:0.55px #2f3b48;">Demo Company</div>
<div class="t" style="left:1061.54px;top:1051.00px;font-size:12.40px;line-height:12.40px;transform:scaleX(0.9618);font-weight:bold;color:#fff;-webkit-text-stroke:0.45px #fff;">CORE</div>
<div class="t" style="left:1727.08px;top:1046.90px;font-size:17.40px;line-height:17.40px;transform:scaleX(0.9241);font-weight:bold;color:#7aab2f;">Fraction ERP</div>
<div class="t" style="left:1833.50px;top:1046.90px;font-size:17.40px;line-height:17.40px;transform:scaleX(0.9732);color:#555;">© 2021</div>
</body></html>
